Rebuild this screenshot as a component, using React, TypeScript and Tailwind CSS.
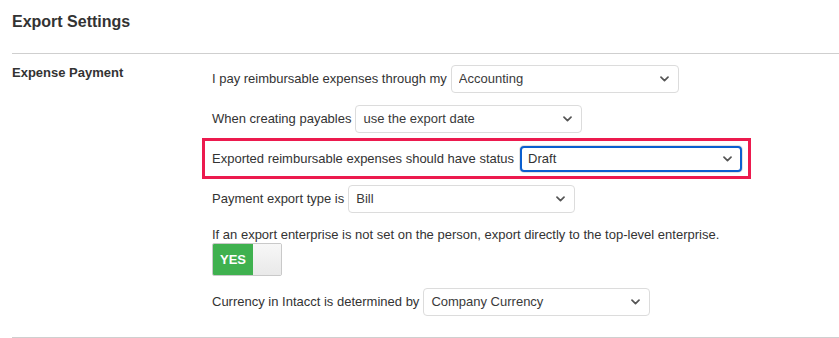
import { useState } from 'react'

function Chevron() {
  return (
    <svg
      className="pointer-events-none absolute right-[10px] top-1/2 -translate-y-1/2"
      width="9"
      height="6"
      viewBox="0 0 9 6"
      fill="none"
    >
      <path d="M1 1.2 4.5 4.6 8 1.2" stroke="#555" strokeWidth="1.7" strokeLinecap="round" strokeLinejoin="round" />
    </svg>
  )
}

function Select({ value, options, width, focused }: { value: string; options: string[]; width: string; focused?: boolean }) {
  const [v, setV] = useState(value)
  return (
    <div className={`relative ${width}`}>
      <select
        value={v}
        onChange={(e) => setV(e.target.value)}
        className={
          focused
            ? 'h-[26px] w-full appearance-none rounded-[4px] border-2 border-[#0b5fcf] bg-white pl-[6px] text-[13px] text-[#333] outline-none ring-1 ring-[#e2e2e2]'
            : 'h-[28px] w-full appearance-none rounded-[4px] border border-[#dcdcdc] bg-white pl-[7px] text-[13px] text-[#3a3a3a] outline-none'
        }
      >
        {options.map((o) => (
          <option key={o}>{o}</option>
        ))}
      </select>
      <Chevron />
    </div>
  )
}

export default function App() {
  const [enterprise, setEnterprise] = useState(true)

  return (
    <div className="min-h-[338px] bg-white text-[#333]" style={{ fontFamily: '"Liberation Sans", Arial, sans-serif' }}>
      <div className="pl-3">
        <h2 className="pt-[12px] text-[16px] font-bold leading-[20px] text-[#333]">Export Settings</h2>
        <div className="mt-[21px] border-t border-[#cfcfcf]" />

        <div className="flex">
          <div className="w-[200px] shrink-0 pt-[11px] text-[13px] font-bold leading-4">Expense Payment</div>

          <div className="flex flex-col text-[13px] leading-4">
            <div className="mt-[11px] flex items-center gap-[4px]">
              <span>I pay reimbursable expenses through my</span>
              <Select value="Accounting" options={['Accounting', 'Credit Card']} width="w-[228px]" />
            </div>

            <div className="mt-[12px] flex items-center gap-[4px]">
              <span>When creating payables</span>
              <Select value="use the export date" options={['use the export date', 'use the expense date']} width="w-[227px]" />
            </div>

            <div className="ml-[-10px] mt-[5px] flex h-[41px] w-[549px] items-center gap-[6px] border-[3px] border-[#ec1a4e] pl-[7px]">
              <span>Exported reimbursable expenses should have status</span>
              <Select value="Draft" options={['Draft', 'Submitted']} width="w-[222px]" focused />
            </div>

            <div className="mt-[6px] flex items-center gap-[4px]">
              <span>Payment export type is</span>
              <Select value="Bill" options={['Bill', 'Expense Report']} width="w-[227px]" />
            </div>

            <div className="mt-[14px]">
              If an export enterprise is not set on the person, export directly to the top-level enterprise.
            </div>

            <button
              onClick={() => setEnterprise(!enterprise)}
              className="flex h-[33px] w-[70px] overflow-hidden rounded-[2px] border border-[#c9c9c9]"
            >
              <span className="flex h-full w-[40px] items-center justify-center bg-[#3fb14f] text-[13px] font-bold text-white">
                {enterprise ? 'YES' : ''}
              </span>
              <span className="h-full flex-1 bg-gradient-to-b from-[#f7f7f7] to-[#e9e9e9]" />
            </button>

            <div className="mt-[12px] flex items-center gap-[4px]">
              <span>Currency in Intacct is determined by</span>
              <Select value="Company Currency" options={['Company Currency', 'Employee Currency']} width="w-[227px]" />
            </div>
          </div>
        </div>

        <div className="mt-[21px] border-t border-[#cfcfcf]" />
      </div>
    </div>
  )
}
